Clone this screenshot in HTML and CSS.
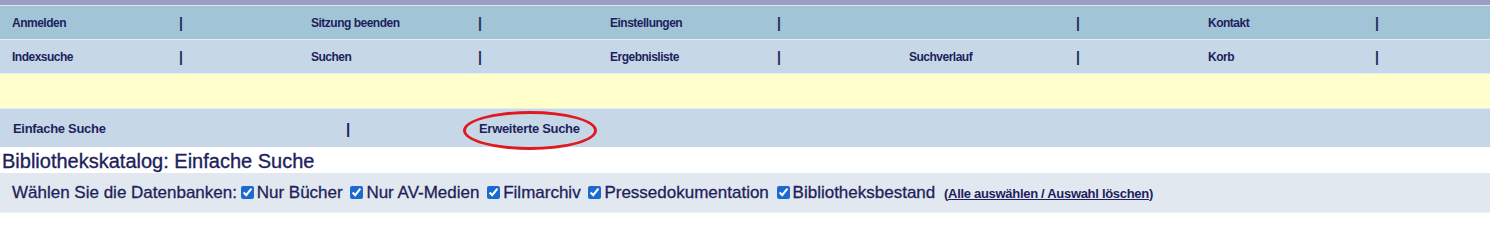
FILE: index.html
```html
<!DOCTYPE html>
<html lang="de">
<head>
<meta charset="utf-8">
<title>Bibliothekskatalog: Einfache Suche</title>
<link rel="stylesheet" href="styles.css">
</head>
<body>
<div class="topbar"></div>
<nav class="navrow row-a">
  <div class="navcell"><a class="navlink" href="#">Anmelden</a><span class="pipe">|</span></div>
  <div class="navcell"><a class="navlink" href="#">Sitzung beenden</a><span class="pipe">|</span></div>
  <div class="navcell"><a class="navlink" href="#">Einstellungen</a><span class="pipe">|</span></div>
  <div class="navcell"><a class="navlink" href="#"></a><span class="pipe">|</span></div>
  <div class="navcell"><a class="navlink" href="#">Kontakt</a><span class="pipe">|</span></div>
</nav>
<nav class="navrow row-b">
  <div class="navcell"><a class="navlink" href="#">Indexsuche</a><span class="pipe">|</span></div>
  <div class="navcell"><a class="navlink" href="#">Suchen</a><span class="pipe">|</span></div>
  <div class="navcell"><a class="navlink" href="#">Ergebnisliste</a><span class="pipe">|</span></div>
  <div class="navcell"><a class="navlink" href="#">Suchverlauf</a><span class="pipe">|</span></div>
  <div class="navcell"><a class="navlink" href="#">Korb</a><span class="pipe">|</span></div>
</nav>
<div class="message"></div>
<div class="tabs">
  <a class="tab tab-first" href="#">Einfache Suche</a>
  <span class="tabpipe">|</span>
  <a class="tab tab-second" href="#">Erweiterte Suche</a>
  <span class="circle"></span>
</div>
<h1 class="title">Bibliothekskatalog: Einfache Suche</h1>
<div class="dbbar"><span class="dblabel">Wählen Sie die Datenbanken:</span> <input type="checkbox" checked id="db1"><label for="db1">Nur Bücher</label> <input type="checkbox" checked id="db2"><label for="db2">Nur AV-Medien</label> <input type="checkbox" checked id="db3"><label for="db3">Filmarchiv</label> <input type="checkbox" checked id="db4"><label for="db4">Pressedokumentation</label> <input type="checkbox" checked id="db5"><label for="db5">Bibliotheksbestand</label> <span class="selectall">(<a href="#">Alle auswählen / Auswahl löschen</a>)</span></div>
</body>
</html>
```
FILE: styles.css
```css
html, body {
  margin: 0;
  padding: 0;
  background: #ffffff;
  font-family: "Liberation Sans", Arial, sans-serif;
  color: #1e1f5c;
  width: 1490px;
  overflow: hidden;
}

.topbar {
  height: 5px;
  background: #9b9dc3;
  border-bottom: 1px solid #dde8f0;
}

.navrow {
  display: grid;
  grid-template-columns: repeat(5, 299px);
  height: 33px;
  align-items: center;
  border-bottom: 1px solid #e4edf4;
}

.row-a { background: #a1c4d7; }
.row-b { background: #c6d8e8; }

.navcell {
  display: flex;
  align-items: center;
  padding-left: 12px;
  padding-top: 1px;
}

.navlink {
  width: 167px;
  font-size: 12px;
  font-weight: bold;
  letter-spacing: -0.5px;
  color: #1e1f5c;
  text-decoration: none;
}

.pipe {
  font-size: 14px;
  font-weight: bold;
  color: #1e2a5c;
}

.message {
  height: 34px;
  background: #ffffcc;
  border-bottom: 1px solid #e4edf4;
}

.tabs {
  position: relative;
  display: flex;
  align-items: center;
  height: 38px;
  background: #c6d8e8;
  padding-left: 13px;
}

.tab {
  font-size: 13px;
  font-weight: bold;
  letter-spacing: -0.3px;
  color: #1e1f5c;
  text-decoration: none;
}

.tab-first { width: 333px; }

.tabpipe {
  width: 133px;
  font-size: 15px;
  font-weight: bold;
  color: #1e1f5c;
}

.circle {
  position: absolute;
  left: 463px;
  top: 2px;
  width: 128px;
  height: 33px;
  border: 3px solid #e0181f;
  border-radius: 50%;
}

.title {
  margin: 0;
  padding: 3px 0 0 2px;
  height: 23px;
  font-size: 20px;
  font-weight: normal;
  line-height: 23px;
  color: #1e1f5c;
  -webkit-text-stroke: 0.35px #1e1f5c;
}

.dbbar {
  height: 39px;
  line-height: 39px;
  background: #e2e8f0;
  padding-left: 12px;
  font-size: 17px;
  white-space: nowrap;
  border-bottom: 1px solid #eef1f5;
  -webkit-text-stroke: 0.3px #1e1f5c;
}

.dblabel {
  margin-right: -5px;
}

.dbbar input {
  width: 13px;
  height: 13px;
  margin: 0 3px 0 4px;
  vertical-align: -1px;
  accent-color: #1c6ad0;
}

.dbbar label {
  margin-right: -1px;
}

.selectall {
  margin-left: 5px;
  font-size: 13px;
  font-weight: bold;
  letter-spacing: -0.3px;
  color: #1e1f5c;
  -webkit-text-stroke: 0;
}

.selectall a {
  color: #1e1f5c;
  text-decoration: underline;
}
```
